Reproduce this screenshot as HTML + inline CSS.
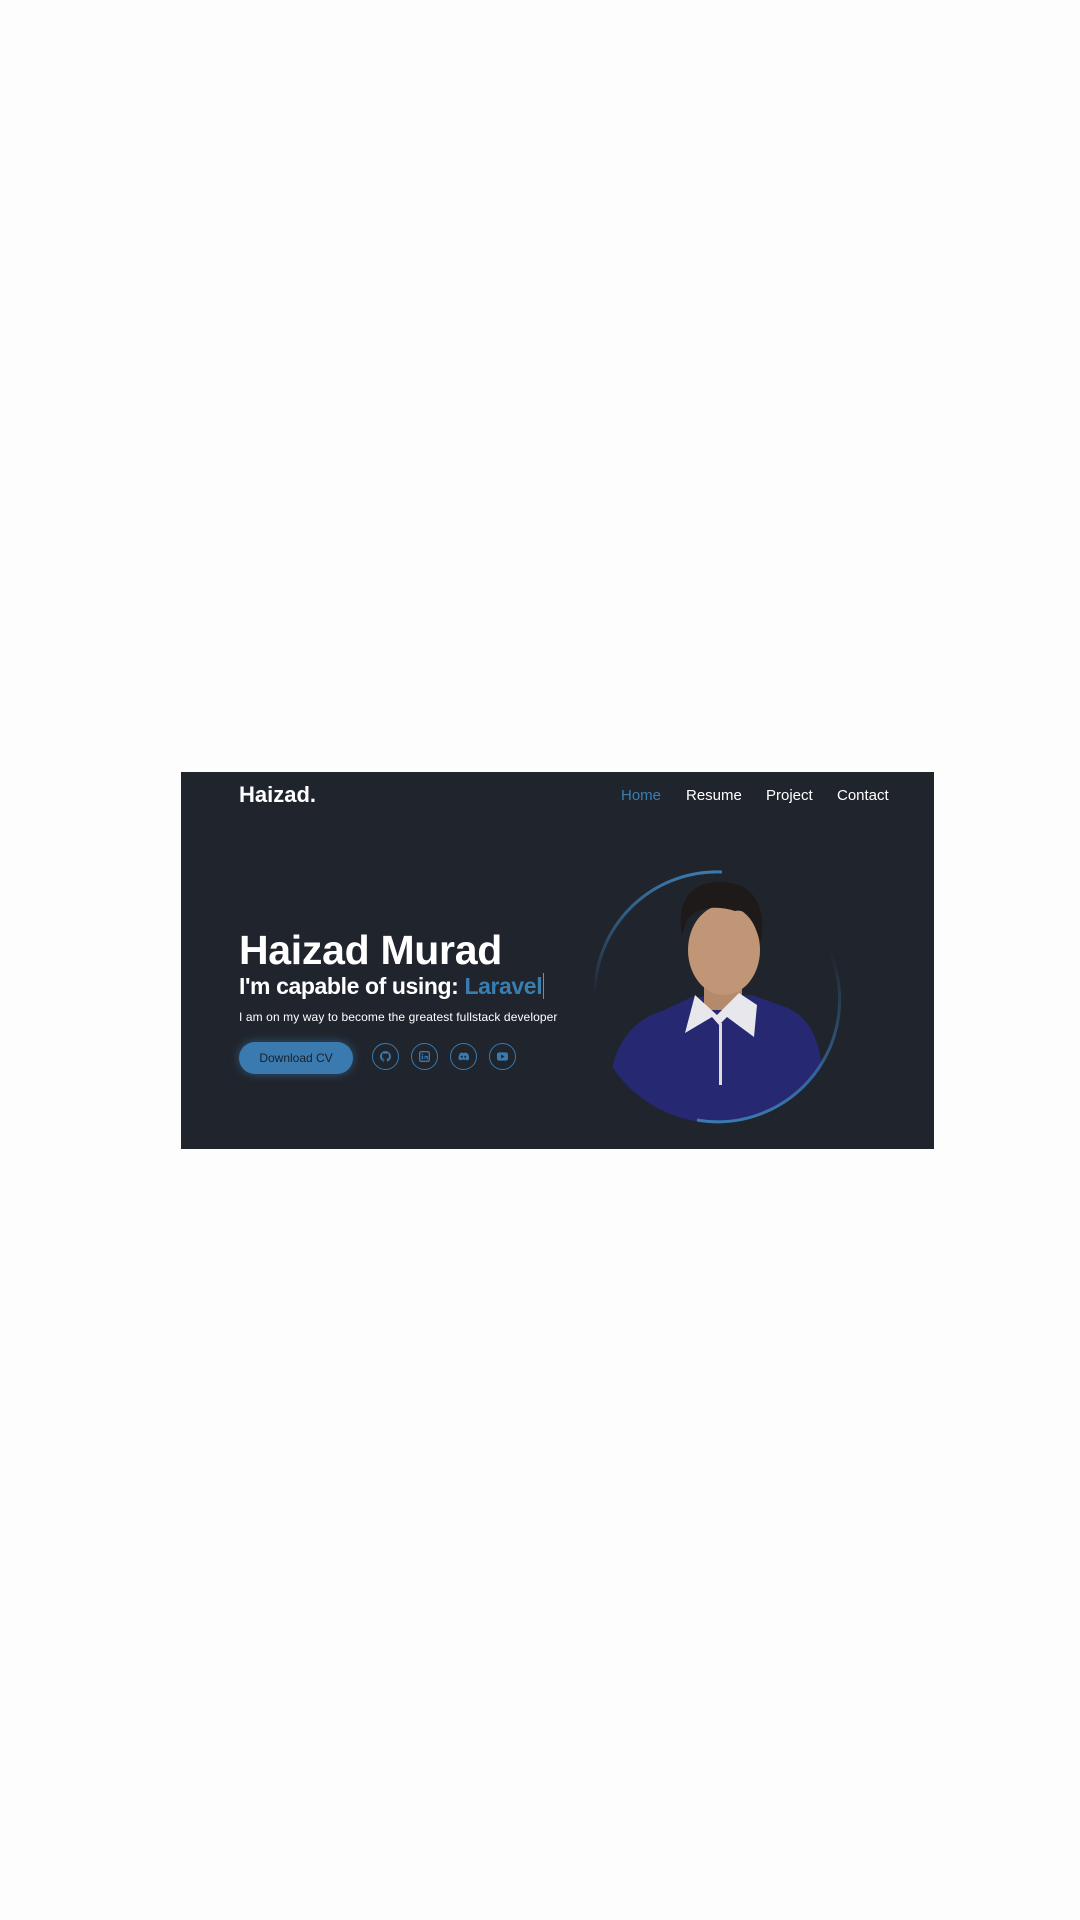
<!DOCTYPE html>
<html><head><meta charset="utf-8"><style>
html,body{margin:0;padding:0;background:#fdfdfd;width:1080px;height:1920px;overflow:hidden;font-family:"Liberation Sans",sans-serif}
#hero{position:absolute;left:181px;top:772px;width:753px;height:377px;background:#20242c}
.a{position:absolute;white-space:nowrap}
.logo{left:58px;top:8px;font-size:22px;font-weight:bold;color:#fff;line-height:30px}
.nav{top:14px;font-size:15px;color:#fff;line-height:20px}
h1{margin:0;left:58px;top:155px;font-size:41px;font-weight:bold;color:#fff;line-height:46px;letter-spacing:-0.3px}
h2{margin:0;left:58px;top:199px;font-size:23px;font-weight:bold;color:#fff;line-height:30px;letter-spacing:-0.4px}
h2 span{color:#3a7db0;border-right:1px solid #6b8fb0;padding-right:1px}
p{margin:0;left:58px;top:237px;font-size:12px;color:#fff;line-height:16px;letter-spacing:0.1px}
.btn{left:58px;top:270px;width:114px;height:32px;border-radius:16px;background:#3a7aae;box-shadow:0 0 10px #3a7aae99;color:#16202c;font-size:12px;text-align:center;line-height:32px}
.ic{top:271px;width:25px;height:25px;border:1.5px solid #3a7aae;border-radius:50%;color:#3a7aae}
.ic svg{position:absolute;left:7px;top:7px}
</style></head><body>
<div id="hero">
<div class="a logo">Haizad.</div>
<div class="a nav" style="left:440px;color:#3a7db0">Home</div>
<div class="a nav" style="left:505px">Resume</div>
<div class="a nav" style="left:585px">Project</div>
<div class="a nav" style="left:656px">Contact</div>
<h1 class="a">Haizad Murad</h1>
<h2 class="a">I'm capable of using: <span>Laravel</span></h2>
<p class="a">I am on my way to become the greatest fullstack developer</p>
<div class="a btn">Download CV</div>
<div class="a ic" style="left:191px"><svg width="11" height="11" viewBox="0 0 16 16"><path fill="#3a7aae" d="M8 0a8 8 0 0 0-2.5 15.6c.4 0 .5-.2.5-.4v-1.5c-2.2.5-2.7-1-2.7-1-.4-.9-.9-1.2-.9-1.2-.7-.5.1-.5.1-.5.8.1 1.2.8 1.2.8.7 1.3 1.9.9 2.3.7.1-.5.3-.9.5-1.1-1.8-.2-3.6-.9-3.6-4 0-.9.3-1.6.8-2.1-.1-.2-.4-1 .1-2.1 0 0 .7-.2 2.2.8a7.5 7.5 0 0 1 4 0c1.5-1 2.2-.8 2.2-.8.4 1.1.2 1.9.1 2.1.5.6.8 1.3.8 2.1 0 3.1-1.8 3.8-3.6 4 .3.3.6.8.6 1.5v2.2c0 .2.1.5.6.4A8 8 0 0 0 8 0z"/></svg></div>
<div class="a ic" style="left:230px"><svg width="11" height="11" viewBox="0 0 16 16"><rect x="1" y="1" width="14" height="14" rx="2" fill="none" stroke="#3a7aae" stroke-width="2"/><rect x="4" y="7" width="2" height="5" fill="#3a7aae"/><rect x="4" y="4" width="2" height="2" fill="#3a7aae"/><path d="M8 12V7h2v1c.5-1 3-1.5 3 1v3h-2V9.5c0-1-2-1-2 0V12z" fill="#3a7aae"/></svg></div>
<div class="a ic" style="left:269px"><svg width="11" height="11" viewBox="0 0 16 16"><path fill="#3a7aae" d="M13 3a13 13 0 0 0-3-1l-.4.8a12 12 0 0 0-3.3 0L5.9 2A13 13 0 0 0 3 3C1 6 .6 9 .8 12a13 13 0 0 0 4 2l.8-1.3-1.3-.6.3-.2a9 9 0 0 0 7.8 0l.3.2-1.3.6.8 1.3a13 13 0 0 0 4-2c.3-3.5-.6-6.5-2.4-9zM5.5 10c-.8 0-1.4-.7-1.4-1.6S4.7 6.8 5.5 6.8s1.4.7 1.4 1.6S6.3 10 5.5 10zm5 0c-.8 0-1.4-.7-1.4-1.6s.6-1.6 1.4-1.6 1.4.7 1.4 1.6-.6 1.6-1.4 1.6z"/></svg></div>
<div class="a ic" style="left:308px"><svg width="11" height="11" viewBox="0 0 16 16"><rect x="0" y="2" width="16" height="12" rx="3" fill="#3a7aae"/><path d="M6 5v6l5-3z" fill="#20242c"/></svg></div>
<svg class="a" style="left:386px;top:93px" width="300" height="300" viewBox="0 0 300 300">
<defs><clipPath id="c"><circle cx="150" cy="132" r="126"/></clipPath>
<linearGradient id="g1" x1="0" y1="0" x2="0" y2="1"><stop offset="0" stop-color="#3a7aae"/><stop offset="1" stop-color="#3a7aae" stop-opacity="0"/></linearGradient>
<linearGradient id="g2" x1="0" y1="1" x2="0" y2="0"><stop offset="0" stop-color="#3a7aae"/><stop offset="1" stop-color="#3a7aae" stop-opacity="0"/></linearGradient></defs>
<g clip-path="url(#c)">
<path d="M44 210 C48 180 65 155 95 146 L125 132 L185 130 L218 142 C240 150 250 170 254 195 L258 300 L40 300Z" fill="#262872"/>
<rect x="137" y="100" width="38" height="45" fill="#b58a6a"/>
<path d="M118 168 L128 130 L150 150 L172 128 L190 140 L187 172 L160 152 L152 160 L145 152Z" fill="#e8e8ec"/>
<rect x="152" y="158" width="3" height="62" fill="#ddd"/>
<ellipse cx="157" cy="85" rx="36" ry="45" fill="#c19676"/>
<path d="M115 70 C108 30 130 16 155 17 C185 18 200 38 194 78 L188 62 C184 50 176 44 168 46 C150 40 130 42 120 55Z" fill="#1e1a1a"/>
</g>
<path d="M28 130 A122 122 0 0 1 155 7" fill="none" stroke="url(#g1)" stroke-width="3"/>
<path d="M262 85 A122 122 0 0 1 130 255" fill="none" stroke="url(#g2)" stroke-width="3"/>
</svg>
</div>
</body></html>
